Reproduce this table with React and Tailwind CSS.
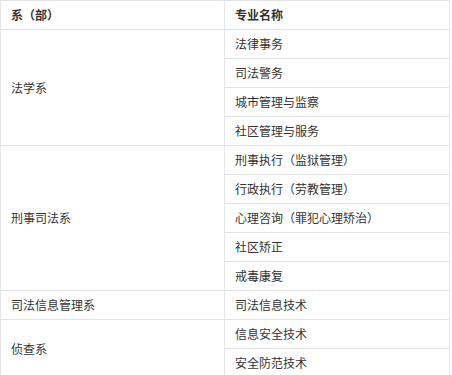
import React from 'react';

const groups = [
  { dept: '法学系', majors: ['法律事务', '司法警务', '城市管理与监察', '社区管理与服务'] },
  { dept: '刑事司法系', majors: ['刑事执行（监狱管理）', '行政执行（劳教管理）', '心理咨询（罪犯心理矫治）', '社区矫正', '戒毒康复'] },
  { dept: '司法信息管理系', majors: ['司法信息技术'] },
  { dept: '侦查系', majors: ['信息安全技术', '安全防范技术'] },
];

const cell = 'border border-[#e4e4e4] h-[29px] px-[10px] py-0 align-middle text-left';

export default function App() {
  return (
    <div className="bg-white w-[452px] h-[375px] overflow-hidden font-['Noto_Sans_CJK_SC',sans-serif] text-[12px] text-[#333]">
      <table className="border-collapse w-[449px] table-fixed">
        <colgroup>
          <col className="w-[224px]" />
          <col className="w-[225px]" />
        </colgroup>
        <thead>
          <tr>
            <th className={`${cell} font-bold`}>系（部）</th>
            <th className={`${cell} font-bold`}>专业名称</th>
          </tr>
        </thead>
        <tbody>
          {groups.map((g) =>
            g.majors.map((m, i) => (
              <tr key={m}>
                {i === 0 && (
                  <td rowSpan={g.majors.length} className={cell}>
                    {g.dept}
                  </td>
                )}
                <td className={cell}>{m}</td>
              </tr>
            ))
          )}
        </tbody>
      </table>
    </div>
  );
}
